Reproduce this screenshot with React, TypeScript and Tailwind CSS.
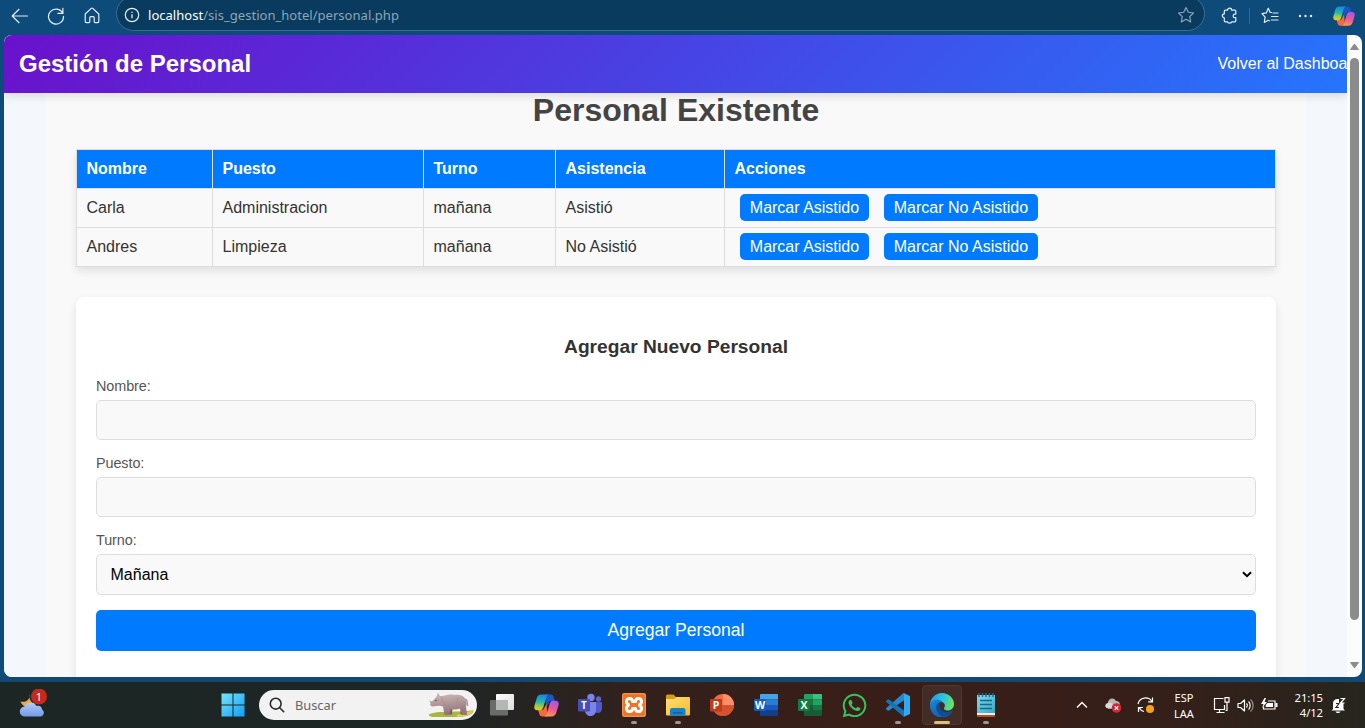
import type { ReactNode } from "react";
import { FaWhatsapp } from "react-icons/fa";

const UI = "font-['Noto_Sans','Open_Sans',sans-serif]";

function BackIcon() {
  return (
    <svg width="18" height="16" viewBox="0 0 18 16" fill="none" stroke="#e4edf4" strokeWidth="1.2" strokeLinecap="round" strokeLinejoin="round">
      <path d="M16.5 8H1.5M8 1.3 1.2 8 8 14.7" />
    </svg>
  );
}

function ReloadIcon() {
  return (
    <svg width="18" height="18" viewBox="0 0 18 18" fill="none" stroke="#e4edf4" strokeWidth="1.2" strokeLinecap="round" strokeLinejoin="round">
      <path d="M15.7 6.2A7.5 7.5 0 1 0 16.5 9.3M15.9 1.4v5h-5" />
    </svg>
  );
}

function HomeIcon() {
  return (
    <svg width="16" height="17" viewBox="0 0 16 17" fill="none" stroke="#e4edf4" strokeWidth="1.2" strokeLinejoin="round">
      <path d="M1.2 7 7.2 1.4a1.2 1.2 0 0 1 1.6 0L14.8 7v7.6a1 1 0 0 1-1 1H11a.8.8 0 0 1-.8-.8v-4.1a1 1 0 0 0-1-1H6.8a1 1 0 0 0-1 1v4.1a.8.8 0 0 1-.8.8H2.2a1 1 0 0 1-1-1Z" />
    </svg>
  );
}

function InfoIcon() {
  return (
    <svg width="16" height="16" viewBox="0 0 16 16" fill="none" stroke="#e4edf4" strokeWidth="1.2">
      <circle cx="8" cy="8" r="6.7" />
      <path d="M8 7.2v4M8 4.7v1.3" strokeWidth="1.3" />
    </svg>
  );
}

function StarIcon() {
  return (
    <svg width="18" height="18" viewBox="0 0 18 18" fill="none" stroke="#8fa9bd" strokeWidth="1.1" strokeLinejoin="round">
      <path d="m9 1.5 2.3 4.8 5.2.7-3.8 3.6 1 5.3L9 13.3l-4.7 2.6 1-5.3L1.5 7l5.2-.7Z" />
    </svg>
  );
}

function PuzzleIcon() {
  return (
    <svg width="17" height="17" viewBox="0 0 17 17" fill="none" stroke="#e4edf4" strokeWidth="1.2" strokeLinejoin="round">
      <path d="M4.3 3.2h2.2c0-2.8 4.2-2.8 4.2 0h3.1a1 1 0 0 1 1 1v2.900h-.9a1.800 1.800 0 0 0 0 3.600h.9v3.100a1 1 0 0 1-1 1h-3.100c0 1.700-4.200 1.700-4.200 0H4.300a1 1 0 0 1-1-1v-3c-2.600 0-2.600-3.900 0-3.900V4.200a1 1 0 0 1 1-1Z" />
    </svg>
  );
}

function FavoritesIcon() {
  return (
    <svg width="18" height="18" viewBox="0 0 18 18" fill="none" stroke="#e4edf4" strokeWidth="1.2" strokeLinejoin="round" strokeLinecap="round">
      <path d="M10.500 5.500 9.2 5.400 7.300 1.200 5.300 5.900 1 6.600l3.100 3.500-.8 5.400 4-2.200 1 .5M12 6H17M10.500 9.500H17M10.500 13H17" />
    </svg>
  );
}

function CopilotIcon({ size }: { size: number }) {
  return (
    <svg width={size} height={size} viewBox="0 0 24 24">
      <defs>
        <linearGradient id="cpA" x1="0.300" y1="0" x2="0.200" y2="1">
          <stop offset="0" stopColor="#1b86e0" />
          <stop offset="0.45" stopColor="#25b5b0" />
          <stop offset="0.75" stopColor="#a4cd43" />
          <stop offset="1" stopColor="#f4c526" />
        </linearGradient>
        <linearGradient id="cpB" x1="0.6" y1="0" x2="0.3" y2="1">
          <stop offset="0" stopColor="#a657e6" />
          <stop offset="0.5" stopColor="#ee5793" />
          <stop offset="1" stopColor="#fb9a51" />
        </linearGradient>
      </defs>
      <path d="M11 1.500h5.200c1.500 0 2.300 1 2.700 2.300L20 8h-5l-3 6Z" fill="#1d55c9" />
      <path d="M13 22.500H7.800c-1.500 0-2.300-1-2.700-2.300L4 16h5l3-6Z" fill="#f46a3c" />
      <path d="M7 1.500h7.500c-1.500 0-2.200 1.200-2.700 2.700L9 13.500c-.5 1.700-1.300 3-3.300 3H3C.7 16.500-.2 14.500.5 12l2.200-7.300C3.400 2.500 5 1.500 7 1.500Z" fill="url(#cpA)" />
      <path d="M17 22.500H9.500c1.500 0 2.200-1.200 2.700-2.700L15 10.500c.5-1.700 1.300-3 3.300-3H21c2.300 0 3.200 2 2.500 4.500l-2.200 7.300c-.7 2.200-2.300 3.200-4.300 3.200Z" fill="url(#cpB)" />
    </svg>
  );
}

function BrowserBar() {
  return (
    <div className={`flex h-[35px] shrink-0 items-start ${UI}`}>
      <div className="flex h-[31px] w-[116px] shrink-0 items-center pl-[11px]">
        <BackIcon />
        <div className="ml-[18px]"><ReloadIcon /></div>
        <div className="ml-[19px]"><HomeIcon /></div>
      </div>
      <div className="-mt-1 flex h-[35px] w-[1089px] shrink-0 items-center rounded-full border border-[#3f6c8c] bg-[#093b5e] pt-[3px] pr-[9px] pl-[7px]">
        <InfoIcon />
        <div className="ml-[8px] grow text-[13px] leading-none tracking-[0.03px] text-[#8fa5b5]">
          <span className="text-white">localhost</span>/sis_gestion_hotel/personal.php
        </div>
        <StarIcon />
      </div>
      <div className="flex h-[31px] grow items-center pl-[16px]">
        <PuzzleIcon />
        <div className="ml-[11px] h-[16px] w-px bg-[#356b92]" />
        <div className="ml-[11px]"><FavoritesIcon /></div>
        <svg className="ml-[19px]" width="15" height="4" viewBox="0 0 15 4" fill="#e4edf4">
          <circle cx="2" cy="2" r="1.2" /><circle cx="7.5" cy="2" r="1.2" /><circle cx="13" cy="2" r="1.2" />
        </svg>
        <div className="ml-[20px]"><CopilotIcon size={22} /></div>
      </div>
    </div>
  );
}

function ActionButton({ children }: { children: ReactNode }) {
  return <button className="mb-px h-[27px] rounded-[5px] bg-[#007bff] px-[10px] pt-px text-white">{children}</button>;
}

const rows = [
  { nombre: "Carla", puesto: "Administracion", turno: "mañana", asistencia: "Asistió" },
  { nombre: "Andres", puesto: "Limpieza", turno: "mañana", asistencia: "No Asistió" },
];

function StaffTable() {
  const cell = "flex h-[39px] items-center border-t border-l border-[#ddd] pl-[9.5px]";
  const grid = "grid grid-cols-[136px_211px_132px_169px_551px]";
  return (
    <div className="w-[1200px] shrink-0 border-r border-b border-[#ddd] text-[#333] shadow-[0_4px_8px_rgba(0,0,0,0.1)]">
      <div className={`${grid} bg-[#007bff] font-bold text-white`}>
        {["Nombre", "Puesto", "Turno", "Asistencia", "Acciones"].map((h) => (
          <div key={h} className={cell}>{h}</div>
        ))}
      </div>
      {rows.map((r) => (
        <div key={r.nombre} className={grid}>
          <div className={cell}>{r.nombre}</div>
          <div className={cell}>{r.puesto}</div>
          <div className={cell}>{r.turno}</div>
          <div className={cell}>{r.asistencia}</div>
          <div className="flex h-[39px] items-center gap-[14.6px] border-t border-l border-[#ddd] pl-[14.8px]">
            <ActionButton>Marcar Asistido</ActionButton>
            <ActionButton>Marcar No Asistido</ActionButton>
          </div>
        </div>
      ))}
    </div>
  );
}

function Field({ label, children }: { label: string; children: ReactNode }) {
  return (
    <label className="block">
      <span className="mb-[5px] block h-[17px] text-[14.4px] leading-[17px] tracking-[-0.08px] text-[#555]">{label}</span>
      {children}
    </label>
  );
}

function StaffForm() {
  const box = "block w-full rounded-[5px] border border-[#ddd] bg-[#f9f9f9]";
  return (
    <div className="mt-[30px] h-[420px] w-[1200px] shrink-0 rounded-[8px] bg-white px-5 pt-[39px] shadow-[0_4px_8px_rgba(0,0,0,0.1)]">
      <h3 className="h-[22px] text-center text-[19.2px] leading-[22px] font-bold text-[#333]">Agregar Nuevo Personal</h3>
      <div className="mt-[20px] flex flex-col gap-[15px]">
        <Field label="Nombre:"><input className={`${box} h-[40px] px-[10px]`} /></Field>
        <Field label="Puesto:"><input className={`${box} h-[40px] px-[10px]`} /></Field>
        <Field label="Turno:">
          <div className={`${box} flex h-[41px] items-center justify-between pr-[3px] pl-[13.5px] text-black`}>
            Mañana
            <svg width="10" height="7" viewBox="0 0 10 7" fill="none" stroke="#000" strokeWidth="2">
              <path d="m1 1.2 4 4 4-4" />
            </svg>
          </div>
        </Field>
        <button className="h-[41px] w-full rounded-[5px] bg-[#007bff] text-[17.6px] text-white">Agregar Personal</button>
      </div>
    </div>
  );
}

function PageView() {
  return (
    <div className="mr-[3px] ml-1 flex h-[642px] shrink-0 overflow-hidden rounded-[8px] bg-[#fcfcfc] font-['Liberation_Sans',Arial,sans-serif] text-[16px]">
      <div className="flex w-[1343px] shrink-0 flex-col overflow-hidden bg-[#f4f7fc]">
        <header className="z-10 flex h-[58px] shrink-0 items-center justify-between bg-[linear-gradient(135deg,#6a11cb,#2575fc)] pl-[15px] text-white shadow-[0_4px_8px_rgba(0,0,0,0.1)]">
          <h1 className="text-[24px] leading-none font-bold">Gestión de Personal</h1>
          <div className="w-[129.5px] overflow-hidden whitespace-nowrap">Volver al Dashboard</div>
        </header>
        <main className="ml-[42px] flex h-[584px] w-[1260px] flex-col items-center overflow-hidden bg-[#f9f9f9]">
          <h2 className="mb-[20px] h-[36px] shrink-0 text-[32px] leading-[34px] font-bold text-[#444]">Personal Existente</h2>
          <StaffTable />
          <StaffForm />
        </main>
      </div>
      <div className="flex grow flex-col items-center justify-between pt-[8px] pb-[8px]">
        <svg width="9" height="7" viewBox="0 0 9 7" fill="#8b8b8b" stroke="#8b8b8b" strokeLinejoin="round"><path d="M4.5 1 8.5 6.5h-8Z" /></svg>
        <div className="mt-[8px] h-[562px] w-[9px] rounded-full bg-[#8b8b8b]" />
        <div className="grow" />
        <svg width="9" height="7" viewBox="0 0 9 7" fill="#8b8b8b" stroke="#8b8b8b" strokeLinejoin="round"><path d="M4.5 6 8.5.5h-8Z" /></svg>
      </div>
    </div>
  );
}

function WeatherIcon() {
  return (
    <svg width="30" height="32" viewBox="0 0 30 32">
      <defs>
        <linearGradient id="cloud" x1="0" y1="0" x2="0" y2="1"><stop stopColor="#b4ccfa" /><stop offset="1" stopColor="#7598e8" /></linearGradient>
      </defs>
      <path d="M10 5c2 5-3 9-8.500 7.500C3 18 12 21 16 15c-4-1-6-5-6-10Z" fill="#f4a934" />
      <path d="M6 27.500a5 5 0 0 1-.5-10C7 12.500 15 12 17.500 17c3-1 5.500 1 5.500 3.500 3.500 2 1.500 7-1.500 7Z" fill="url(#cloud)" />
      <circle cx="20" cy="7.500" r="8" fill="#c42b1c" />
      <text x="20" y="11.500" textAnchor="middle" fontSize="11" fill="#fff" fontFamily="Noto Sans">1</text>
    </svg>
  );
}

function WindowsIcon() {
  return (
    <svg width="24" height="24" viewBox="0 0 24 24">
      <defs><linearGradient id="win" gradientUnits="userSpaceOnUse" x1="0" y1="0" x2="24" y2="24"><stop stopColor="#75e5fd" /><stop offset="1" stopColor="#109cf5" /></linearGradient></defs>
      <path d="M.5.500h11v11H.5ZM12.500.500h11v11h-11ZM.5 12.500h11v11H.5ZM12.500 12.500h11v11h-11Z" fill="url(#win)" />
    </svg>
  );
}

function RhinoIcon() {
  return (
    <svg width="46" height="26" viewBox="0 0 46 26">
      <defs><linearGradient id="rhino" x1="0" y1="0" x2="0.2" y2="1"><stop stopColor="#d3bebd" /><stop offset="1" stopColor="#937679" /></linearGradient></defs>
      <path d="M1 22.500C6 18 38 21 45 18c2 2-3 7-14 7H4c-2-.5-4-1.500-3-2.500Z" fill="#a9b63c" />
      <path d="M28 23c7-1 13-3 17-5 0 4-6 6-15 7Z" fill="#e0cf58" />
      <path d="M32.500 14h4L36 22.500h-3.500ZM21 15h3.500l-.5 7.500h-3Z" fill="#75595f" />
      <path d="M.500 6.500C1 8 2 9 4 9.500L6 7.500 8.500 4.500 10 .5l2 3.500c6 0 7-2 12-1.500 5 .5 11-.5 13.500 4.500 1 3 1.500 5 .5 7.500L39 23h-4.500L32 16.500c-3 1-6 1.500-9 .5L21 23h-4.500L15 14.500c-2.500-.5-4-1-6-.5l-5 .5c-2-1-2-2-1.500-3.500Z" fill="url(#rhino)" />
      <path d="M38 7c2 2 .5 5 2 7" fill="none" stroke="#8a6c70" />
      <circle cx="8" cy="8.500" r=".7" fill="#42343a" />
      <path d="M14 5c0 4 1 6 4 8M29 6c1 4 1 6 0 9" fill="none" stroke="#a58b8e" strokeWidth=".7" />
    </svg>
  );
}

function TaskViewIcon() {
  return (
    <svg width="24" height="24" viewBox="0 0 24 24">
      <defs><linearGradient id="tv" x1="0" y1="0" x2="1" y2="1"><stop stopColor="#fff" /><stop offset="1" stopColor="#dcdcdc" /></linearGradient></defs>
      <rect x="6" y="1" width="18" height="16" rx="1" fill="url(#tv)" />
      <rect x="0" y="7" width="18" height="15.5" rx="1" fill="#696c6b" />
      <path d="M6 7h12v10H6Z" fill="#b5b6b6" />
    </svg>
  );
}

function TeamsIcon() {
  return (
    <svg width="24" height="24" viewBox="0 0 24 24">
      <circle cx="20.5" cy="6" r="2.7" fill="#5b62c8" />
      <circle cx="13" cy="4.5" r="3.7" fill="#7b83eb" />
      <path d="M17 9h6a1 1 0 0 1 1 1v5c0 5-4 6-7 4Z" fill="#5059c9" />
      <path d="M7 9h11v8c0 8-11 8-11 0Z" fill="#7b83eb" />
      <rect x="0" y="6" width="12" height="12.500" rx="1" fill="#464eb8" />
      <text x="6" y="15.700" fontSize="10" fontWeight="700" textAnchor="middle" fill="#fff" fontFamily="Open Sans">T</text>
    </svg>
  );
}

function XamppIcon() {
  return (
    <svg width="24" height="24" viewBox="0 0 24 24">
      <rect width="24" height="24" rx="2" fill="#ed7424" />
      <rect x=".7" y=".7" width="22.600" height="22.600" rx="2" fill="none" stroke="#f6a368" strokeWidth=".8" />
      <path d="M7.500 5.400c2 0 3 1.200 3 3h3c0-1.800 1-3 3-3 3.300 0 4.200 4.600 1.200 6v1.200c3 1.400 2.100 6-1.200 6-2 0-3-1.200-3-3h-3c0 1.800-1 3-3 3-3.300 0-4.200-4.600-1.200-6v-1.200c-3-1.400-2.100-6 1.200-6Z" fill="none" stroke="#fff" strokeWidth="3" strokeLinejoin="round" />
    </svg>
  );
}

function FolderIcon() {
  return (
    <svg width="26" height="24" viewBox="0 0 26 24">
      <defs><linearGradient id="fold" x1="0" y1="0" x2="1" y2="1"><stop stopColor="#ffe07b" /><stop offset="1" stopColor="#f5b921" /></linearGradient></defs>
      <path d="M1 3a1.500 1.500 0 0 1 1.500-1.500h6L11 4v4H1Z" fill="#d99a16" />
      <path d="M1 6h8l2.500-2H24a1 1 0 0 1 1 1v16.500a1 1 0 0 1-1 1H2a1 1 0 0 1-1-1Z" fill="url(#fold)" />
      <path d="M5 22.500V17a2 2 0 0 1 2-2h11.500a2 2 0 0 1 2 2v5.500Z" fill="#1681cc" />
      <path d="M8 19h9.500v1.500H8Z" fill="#1160a1" />
    </svg>
  );
}

function PowerPointIcon() {
  return (
    <svg width="26" height="24" viewBox="0 0 26 24">
      <circle cx="14" cy="12" r="11" fill="#ed6c47" />
      <path d="M14 1a11 11 0 0 1 11 11H14Z" fill="#ff8f6b" />
      <path d="M3 12h22a11 11 0 0 1-22 0Z" fill="#d35230" />
      <rect x="1" y="6" width="12" height="12.500" rx="1" fill="#c13b1b" />
      <text x="7" y="16" fontSize="10.500" fontWeight="700" textAnchor="middle" fill="#fff" fontFamily="Open Sans">P</text>
    </svg>
  );
}

function WordIcon() {
  return (
    <svg width="24" height="24" viewBox="0 0 24 24">
      <path d="M6 2a1 1 0 0 1 1-1h16a1 1 0 0 1 1 1v4.500H6Z" fill="#41a5ee" />
      <path d="M6 6.500h18V12H6Z" fill="#2b7cd3" /><path d="M6 12h18v5.500H6Z" fill="#185abd" />
      <path d="M6 17.500h18V22a1 1 0 0 1-1 1H7a1 1 0 0 1-1-1Z" fill="#103f91" />
      <rect y="6" width="12" height="12" rx="1" fill="#185abd" />
      <text x="6" y="15.700" fontSize="10.500" fontWeight="700" textAnchor="middle" fill="#fff" fontFamily="Open Sans">W</text>
    </svg>
  );
}

function ExcelIcon() {
  return (
    <svg width="24" height="24" viewBox="0 0 24 24">
      <path d="M6 2a1 1 0 0 1 1-1h8v5.500H6Z" fill="#21a366" /><path d="M15 1h8a1 1 0 0 1 1 1v4.500h-9Z" fill="#33c481" />
      <path d="M6 6.500h9V12H6Z" fill="#107c41" /><path d="M15 6.500h9V12h-9Z" fill="#21a366" />
      <path d="M6 12h9v5.500h9V22a1 1 0 0 1-1 1H7a1 1 0 0 1-1-1Z" fill="#185c37" /><path d="M15 12h9v5.500h-9Z" fill="#107c41" />
      <rect y="6" width="12" height="12" rx="1" fill="#107c41" />
      <text x="6" y="15.700" fontSize="10.500" fontWeight="700" textAnchor="middle" fill="#fff" fontFamily="Open Sans">X</text>
    </svg>
  );
}

function CodeIcon() {
  return (
    <svg width="24" height="24" viewBox="0 0 24 24">
      <path d="M1.6 17.500.3 16.300a1 1 0 0 1 0-1.400L17.500 0l1 .5V7L3 17.500a1 1 0 0 1-1.400 0Z" fill="#2389cf" />
      <path d="M1.600 6.500a1 1 0 0 1 1.400 0L18 17.500V24L.3 9.100a1 1 0 0 1 0-1.400Z" fill="#1473b4" />
      <path d="M17.500 0 24 3v18l-6.500 3c.5-.2.5-1 .5-1.500V1.500c0-.5 0-1.300-.5-1.500Z" fill="#32a8ed" />
    </svg>
  );
}

function EdgeIcon() {
  return (
    <svg width="24" height="24" viewBox="0 0 24 24">
      <defs>
        <linearGradient id="edgA" x1="0" y1="0.3" x2="1" y2="0.5"><stop stopColor="#2699e7" /><stop offset=".55" stopColor="#2bc6dd" /><stop offset="1" stopColor="#72e653" /></linearGradient>
        <linearGradient id="edgB" x1="0" y1="0" x2="1" y2="1"><stop stopColor="#1b83d8" /><stop offset="1" stopColor="#0c56a5" /></linearGradient>
      </defs>
      <path d="M0 12C0 5 5.500 0 12 0s12 5 12 11c0 4-3 6.500-6.500 6.500-2.500 0-4-1-3.500-2.200 3-4.300-2-8.300-7-6.300C3.500 9 1 11 0 12Z" fill="url(#edgA)" />
      <path d="M0 12c.5-5 8-7 12-3.500-3 0-4 2.500-4 5 0 5 7 8.500 14 4.500 1 0 .5 1-.5 2A12 12 0 0 1 0 12Z" fill="url(#edgB)" />
      <path d="M12 8.500c-5 1-7 5-5 9.500 1.500 3.500 4.500 5.500 7.500 5.700A12 12 0 0 0 22 19c1-1 .5-1.500-.5-1-6.500 3-11.500-.5-12-4-.3-2 .5-4.500 2.500-5.500Z" fill="#0c4f96" />
    </svg>
  );
}

function NotepadIcon() {
  return (
    <svg width="20" height="26" viewBox="0 0 20 26">
      <defs><linearGradient id="note" x1="0" y1="0" x2="1" y2="1"><stop stopColor="#80def0" /><stop offset="1" stopColor="#3aa4c4" /></linearGradient></defs>
      <path d="M1 21h18v3a1 1 0 0 1-1 1H2a1 1 0 0 1-1-1Z" fill="#b54e20" />
      <path d="M1 20h18v3H1Z" fill="#f1eee9" />
      <path d="M1 3h18v18H1Z" fill="url(#note)" />
      <path d="M3 1v4M6.500 1v4M10 1v4M13.500 1v4M17 1v4" stroke="#1d6d8c" strokeWidth="1.400" />
      <path d="M4 8.500h12M4 12.500h12M4 16.500h12" stroke="#166a88" strokeWidth="1.500" />
    </svg>
  );
}

function TaskbarApp({ children, mark }: { children: ReactNode; mark?: "dot" | "active" }) {
  return (
    <div className={`relative flex h-[40px] w-[40px] shrink-0 items-center justify-center rounded-[4px] border ${mark === "active" ? "border-[#51372f] bg-[#432c26]" : "border-transparent"}`}>
      {children}
      {mark === "dot" && <div className="absolute bottom-0 left-1/2 h-[3px] w-[6px] -translate-x-1/2 rounded-full bg-[#a0948f]" />}
      {mark === "active" && <div className="absolute bottom-0 left-1/2 h-[3px] w-[16px] -translate-x-1/2 rounded-full bg-[#dcc074]" />}
    </div>
  );
}

function Tray() {
  return (
    <div className="flex h-full grow items-center text-[11px] leading-[15.5px] text-white">
      <svg className="-ml-px" width="12" height="8" viewBox="0 0 12 8" fill="none" stroke="#fff" strokeWidth="1.4"><path d="m1 6.500 5-5 5 5" /></svg>
      <svg className="ml-[17px]" width="17" height="15" viewBox="0 0 17 15">
        <path d="M3.500 10.500C-1 10 0 5.500 3 5c0-5 6-6 8-2 3 0 4 2 4 4v3.500Z" fill="#b9b7b5" />
        <path d="M3 5c3-1 6 1 8 5.500H3.500C-1 10 0 5.500 3 5Z" fill="#dad9d8" />
        <circle cx="11.500" cy="10" r="4.800" fill="#ce2738" /><path d="m9.700 8.200 3.600 3.600M13.300 8.200l-3.600 3.600" stroke="#fff" strokeWidth="1.200" />
      </svg>
      <svg className="ml-[15px]" width="19" height="18" viewBox="0 0 19 18" fill="none" stroke="#fff" strokeWidth="1.2">
        <path d="M1 8C2.500 1 11.500 0 15 5.500M15.500 1.500v4.300h-4.300M7 15.500c-2-.5-4-2-5-4M1.500 16v-4.500H6" />
        <circle cx="13" cy="13" r="4" fill="#f7a21b" stroke="none" />
      </svg>
      <div className="ml-[15px] w-[26px] pt-px text-center">ESP<br />LAA</div>
      <svg className="ml-[16px]" width="17" height="17" viewBox="0 0 17 17" fill="none" stroke="#fff" strokeWidth="1.2">
        <path d="M10.500 1.500h-9v11h10V8M3.500 15.500h8M6.500 12.500v3M12 .7h4v4.500h-4ZM14 5.200v8.300h-1.500" />
      </svg>
      <svg className="ml-[7px]" width="17" height="15" viewBox="0 0 17 15" fill="none" stroke="#fff" strokeWidth="1.2" strokeLinejoin="round">
        <path d="M1 5.500h2.500l4-3.500v11l-4-3.500H1ZM9.500 5.500c1 1 1 3 0 4M11.500 3.500c2.200 2 2.200 6 0 8" /><path d="M13.500 1.500c3.500 3 3.500 9 0 12" stroke="#9b8d86" />
      </svg>
      <svg className="ml-[7px]" width="18" height="14" viewBox="0 0 18 14">
        <path d="M7 3h7v8H2.500V8.500" fill="none" stroke="#fff" strokeWidth="1.2" /><path d="M5 6.500 6.500 5H12v4H4.500ZM14.500 5h2v4h-2ZM3.500 0 0 6h2.500L1 10l5-6H3.500L5 0Z" fill="#fff" />
      </svg>
      <div className="ml-[8px] w-[36px] text-right text-[11.3px] tracking-[-0.1px]">21:15<br />4/12</div>
      <svg className="ml-[8px]" width="16" height="17" viewBox="0 0 16 17">
        <path d="M2 12V6.500C2 3.500 4 2 6.500 2H8v4h4.500v6l1.500 1.500H.5ZM4.500 14.500h5c-1 2-4 2-5 0Z" fill="#fff" />
        <path d="M5 6.500h3l-3 4h3" fill="none" stroke="#2e241d" strokeWidth="1.2" /><path d="M9.500 1.500h4l-4 4.500h4" fill="none" stroke="#fff" strokeWidth="1.2" />
      </svg>
    </div>
  );
}

function Taskbar() {
  return (
    <div className={`flex h-[46px] shrink-0 items-center bg-[linear-gradient(90deg,#1c2625_0%,#1d2625_32%,#33201b_48%,#391e17_65%,#351f19_85%,#26251d_100%)] ${UI}`}>
      <div className="w-[203px] shrink-0 pl-[19px]"><WeatherIcon /></div>
      <div className="flex w-[56px] shrink-0 justify-center pl-[4px]"><WindowsIcon /></div>
      <div className="flex h-[30px] w-[218px] shrink-0 items-center rounded-full bg-[#f2f2f2] pr-[3px] pl-[10px]">
        <svg width="16" height="16" viewBox="0 0 16 16" fill="none" stroke="#292929" strokeWidth="1.6" strokeLinecap="round"><circle cx="6.7" cy="6.7" r="5.4" /><path d="m10.700 10.700 4 4" /></svg>
        <span className="ml-[10px] grow pt-px text-[12.8px] text-[#666]">Buscar</span>
        <RhinoIcon />
      </div>
      <div className="ml-[5px] flex w-[595px] shrink-0 gap-1">
        <TaskbarApp><TaskViewIcon /></TaskbarApp>
        <TaskbarApp><CopilotIcon size={25} /></TaskbarApp>
        <TaskbarApp><TeamsIcon /></TaskbarApp>
        <TaskbarApp mark="dot"><XamppIcon /></TaskbarApp>
        <TaskbarApp mark="dot"><FolderIcon /></TaskbarApp>
        <TaskbarApp><PowerPointIcon /></TaskbarApp>
        <TaskbarApp><WordIcon /></TaskbarApp>
        <TaskbarApp><ExcelIcon /></TaskbarApp>
        <TaskbarApp><FaWhatsapp size={27} color="#39c35f" /></TaskbarApp>
        <TaskbarApp mark="dot"><CodeIcon /></TaskbarApp>
        <TaskbarApp mark="active"><EdgeIcon /></TaskbarApp>
        <TaskbarApp mark="dot"><NotepadIcon /></TaskbarApp>
      </div>
      <Tray />
    </div>
  );
}

export default function App() {
  return (
    <div className="flex h-[728px] w-[1365px] flex-col overflow-hidden bg-[#0d4b7a]">
      <BrowserBar />
      <PageView />
      <div className="h-[5px] shrink-0 bg-[#144873]" />
      <Taskbar />
    </div>
  );
}
